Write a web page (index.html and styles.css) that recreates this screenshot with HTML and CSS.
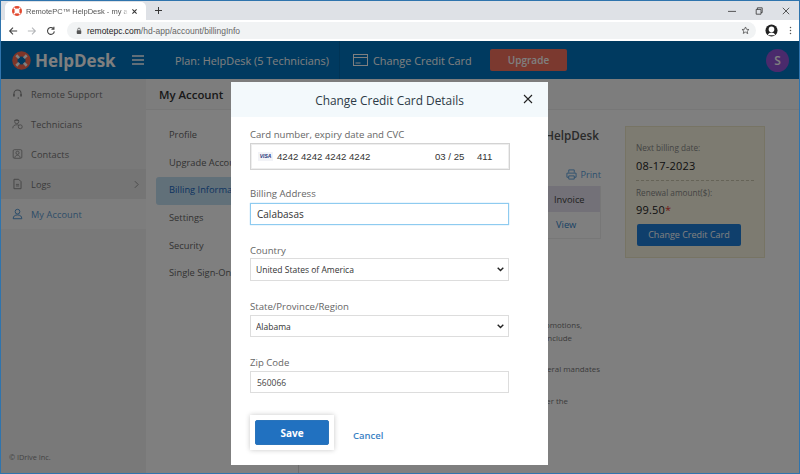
FILE: index.html
```html
<!DOCTYPE html>
<html lang="en">
<head>
<meta charset="utf-8">
<title>RemotePC HelpDesk - my account</title>
<link rel="stylesheet" href="styles.css">
</head>
<body>
<div class="window">
  <div class="tabstrip">
    <div class="tab">
      <svg class="favicon" viewBox="0 0 20 20"><circle cx="10" cy="10" r="7.500" fill="none" stroke="#e2492f" stroke-width="5"/><path d="M3.500 3.500l3.500 3.500M16.500 3.500L13 7M3.500 16.500L7 13M16.500 16.500L13 13" stroke="#fff" stroke-width="2.600"/></svg>
      <span class="tab-title">RemotePC™ HelpDesk - my acco</span>
      <svg class="tab-close" viewBox="0 0 10 10"><path d="M2 2l6 6M8 2l-6 6" stroke="#333" stroke-width="1.500"/></svg>
    </div>
    <svg class="new-tab" viewBox="0 0 10 10"><path d="M5 0v10M0 5h10" stroke="#333" stroke-width="1.400"/></svg>
    <div class="win-controls">
      <svg viewBox="0 0 10 10"><path d="M0 5.500h10" stroke="#333"/></svg>
      <svg viewBox="0 0 10 10"><path d="M1.500 3h6v6h-6zM3 3V1h6v6H7.500" fill="none" stroke="#333"/></svg>
      <svg viewBox="0 0 10 10"><path d="M1 1l8 8M9 1l-8 8" stroke="#333"/></svg>
    </div>
  </div>
  <div class="toolbar">
    <svg class="nav" viewBox="0 0 12 12"><path d="M11 6H2M6 2L2 6l4 4" fill="none" stroke="#444" stroke-width="1.300"/></svg>
    <svg class="nav" viewBox="0 0 12 12"><path d="M1 6h9M6 2l4 4-4 4" fill="none" stroke="#b5b7ba" stroke-width="1.300"/></svg>
    <svg class="nav" viewBox="0 0 12 12"><path d="M10 6.500A4.100 4.100 0 1 1 8.800 3M9.500 0.800v3h-3" fill="none" stroke="#444" stroke-width="1.300"/></svg>
    <div class="omnibox">
      <svg class="lock" viewBox="0 0 8 10"><rect x="1" y="4" width="6" height="5" rx="1" fill="#555"/><path d="M2.300 4V2.800a1.700 1.700 0 0 1 3.400 0V4" fill="none" stroke="#555"/></svg>
      <span class="url"><span class="url-host">remotepc.com</span>/hd-app/account/billingInfo</span>
      <svg class="star" viewBox="0 0 12 12"><path d="M6 1.300l1.400 3.100 3.300.3-2.500 2.200.8 3.300L6 8.200 3 9.900l.8-3.300L1.300 4.700l3.300-.3z" fill="none" stroke="#555" stroke-width="1.100"/></svg>
    </div>
    <svg class="profile" viewBox="0 0 14 14"><circle cx="7" cy="7" r="6.500" fill="#222"/><circle cx="7" cy="5.800" r="3" fill="#fff"/><path d="M2.800 12c1-2 2.600-2.800 4.200-2.800s3.200.8 4.200 2.800z" fill="#fff"/></svg>
    <svg class="dots" viewBox="0 0 4 12"><circle cx="2" cy="2" r="1" fill="#555"/><circle cx="2" cy="6" r="1" fill="#555"/><circle cx="2" cy="10" r="1" fill="#555"/></svg>
  </div>

  <div class="app">
    <header class="topbar">
      <svg class="logo" viewBox="0 0 20 20"><circle cx="10" cy="10" r="7" fill="none" stroke="#ff6a50" stroke-width="5.500"/><path d="M4.500 4.500l3 3M15.500 4.500l-3 3M4.500 15.500l3-3M15.500 15.500l-3-3" stroke="#fff" stroke-width="2.800"/></svg>
      <span class="brand">HelpDesk</span>
      <svg class="burger" viewBox="0 0 12 10"><path d="M0 1h12M0 5h12M0 9h12" stroke="#fff" stroke-width="1.500"/></svg>
      <span class="plan">Plan: HelpDesk (5 Technicians)</span>
      <span class="top-divider"></span>
      <svg class="card-icon" viewBox="0 0 15 12"><rect x="0.500" y="0.500" width="14" height="11" fill="none" stroke="#fff"/><path d="M1 3.500h13M2.500 9h5" stroke="#fff"/></svg>
      <span class="change-link">Change Credit Card</span>
      <span class="upgrade">Upgrade</span>
      <span class="avatar">S</span>
    </header>

    <div class="workspace">
      <nav class="sidebar">
        <div class="side-list">
          <div class="side-item">
            <svg class="side-icon" viewBox="0 0 14 14"><path d="M2.500 9V6.500a4.500 4.500 0 0 1 9 0V9" fill="none" stroke="currentColor" stroke-width="1.300"/><rect x="1.500" y="7" width="2" height="3.500" rx="1" fill="currentColor"/><rect x="10.500" y="7" width="2" height="3.500" rx="1" fill="currentColor"/><circle cx="8" cy="12" r="1" fill="currentColor"/></svg>
            <span>Remote Support</span>
          </div>
          <div class="side-item">
            <svg class="side-icon" viewBox="0 0 14 14"><circle cx="6" cy="4" r="2.600" fill="none" stroke="currentColor"/><path d="M1 12.500c0-3 2-4.500 5-4.500 1 0 2 .2 2.800.7M3 2.500h6" fill="none" stroke="currentColor"/><circle cx="10.500" cy="10.500" r="2.500" fill="none" stroke="currentColor"/></svg>
            <span>Technicians</span>
          </div>
          <div class="side-item">
            <svg class="side-icon" viewBox="0 0 14 14"><rect x="1.500" y="1.500" width="11" height="11" rx="1.500" fill="none" stroke="currentColor"/><circle cx="7" cy="5.500" r="2" fill="none" stroke="currentColor"/><path d="M3.500 12c.4-2.500 2-3.500 3.500-3.500s3.100 1 3.500 3.500" fill="none" stroke="currentColor"/></svg>
            <span>Contacts</span>
          </div>
          <div class="side-item side-logs">
            <svg class="side-icon" viewBox="0 0 14 14"><path d="M2.500 1h6l3 3v9h-9z" fill="none" stroke="currentColor" stroke-width="1.200"/><path d="M5 7.500h4M5 9.500h4" stroke="currentColor"/></svg>
            <span>Logs</span>
            <svg class="side-chevron" viewBox="0 0 6 10"><path d="M1 1l4 4-4 4" fill="none" stroke="currentColor" stroke-width="1.200"/></svg>
          </div>
          <div class="side-item side-active">
            <svg class="side-icon" viewBox="0 0 14 14"><circle cx="7" cy="4" r="3" fill="none" stroke="currentColor" stroke-width="1.200"/><path d="M1.500 13c0-3.300 2.300-4.800 5.500-4.800s5.500 1.500 5.500 4.800z" fill="none" stroke="currentColor" stroke-width="1.200"/></svg>
            <span>My Account</span>
          </div>
        </div>
        <div class="copyright">© IDrive Inc.</div>
      </nav>

      <div class="content">
        <div class="page-title">My Account</div>
        <div class="panels">
          <div class="subnav">
            <div class="sub-item">Profile</div>
            <div class="sub-item">Upgrade Account</div>
            <div class="sub-item sub-active">Billing Information</div>
            <div class="sub-item">Settings</div>
            <div class="sub-item">Security</div>
            <div class="sub-item">Single Sign-On</div>
          </div>
          <div class="main">
            <div class="plan-col">
              <div class="plan-name">HelpDesk</div>
              <div class="print">
                <svg class="print-icon" viewBox="0 0 12 12"><path d="M3 4V1h6v3M3 9H1V4.500h10V9H9M3 7.500h6V11H3z" fill="none" stroke="currentColor"/></svg>
                <span>Print</span>
              </div>
              <div class="table">
                <div class="table-head">Invoice</div>
                <div class="table-cell">View</div>
              </div>
              <div class="notes">
                <p class="note note-a">promotions,</p>
                <p class="note note-b">include</p>
                <p class="note note-c">federal mandates</p>
                <p class="note note-d">under the</p>
              </div>
            </div>
            <aside class="billing-box">
              <div class="box-label">Next billing date:</div>
              <div class="box-value">08-17-2023</div>
              <div class="box-rule"></div>
              <div class="box-label">Renewal amount($):</div>
              <div class="box-value box-amount">99.50<span class="asterisk">*</span></div>
              <div class="box-button">Change Credit Card</div>
            </aside>
          </div>
        </div>
      </div>
    </div>
    <div class="overlay"></div>
  </div>

  <section class="modal">
    <div class="modal-head">
      <span class="modal-title">Change Credit Card Details</span>
      <svg class="modal-close" viewBox="0 0 10 10"><path d="M1 1l8 8M9 1l-8 8" stroke="#222" stroke-width="1.100"/></svg>
    </div>
    <form class="modal-body">
      <label class="field-label">Card number, expiry date and CVC</label>
      <div class="card-field">
        <span class="visa">VISA</span>
        <span class="card-number">4242 4242 4242 4242</span>
        <span class="card-exp">03 / 25</span>
        <span class="card-cvc">411</span>
      </div>
      <label class="field-label label-address">Billing Address</label>
      <input class="text-input input-focus" type="text" value="Calabasas">
      <label class="field-label label-next">Country</label>
      <select class="select-input select-country"><option>United States of America</option></select>
      <label class="field-label label-next">State/Province/Region</label>
      <select class="select-input"><option>Alabama</option></select>
      <label class="field-label label-next">Zip Code</label>
      <input class="text-input input-zip" type="text" value="560066">
      <div class="actions">
        <div class="save-wrap"><button class="save" type="button">Save</button></div>
        <a class="cancel">Cancel</a>
      </div>
    </form>
  </section>
</div>
</body>
</html>
```

FILE: styles.css
```css
* { box-sizing: border-box; }
html, body { margin: 0; height: 100%; overflow: hidden; }
body { font-family: "Open Sans", "Noto Sans", sans-serif; background: #fff; }

.window {
  position: relative;
  width: 800px;
  height: 474px;
  border: 1px solid #2f74ad;
  display: flex;
  flex-direction: column;
  overflow: hidden;
}

/* browser chrome */
.tabstrip {
  height: 19px;
  background: #dee1e6;
  display: flex;
  align-items: flex-end;
  padding-left: 4px;
  flex: none;
}
.tab {
  width: 141px;
  height: 18px;
  background: #fff;
  border-radius: 5px 5px 0 0;
  display: flex;
  align-items: center;
  padding: 0 5px 0 7px;
}
.favicon { width: 10px; height: 10px; flex: none; }
.tab-title {
  margin-left: 4px;
  width: 102px;
  font: 7.500px "Liberation Sans", sans-serif;
  color: #555;
  white-space: nowrap;
  flex: none;
  -webkit-mask-image: linear-gradient(90deg, #000 94%, transparent 100%);
  mask-image: linear-gradient(90deg, #000 94%, transparent 100%);
}
.tab-close { width: 7px; height: 7px; margin-left: 3px; flex: none; }
.new-tab { width: 7px; height: 7px; margin: 0 0 6px 9px; flex: none; }
.win-controls {
  margin-left: auto;
  display: flex;
  gap: 19px;
  padding: 0 9px 5px 0;
}
.win-controls svg { width: 8px; height: 8px; display: block; }
.toolbar {
  height: 21px;
  background: #fff;
  display: flex;
  align-items: center;
  padding-left: 7px;
  flex: none;
}
.nav { width: 10px; height: 10px; margin-right: 9px; flex: none; }
.omnibox {
  margin-left: 2px;
  width: 689px;
  height: 17px;
  background: #f1f3f4;
  border-radius: 9px;
  display: flex;
  align-items: center;
  padding: 0 6px 0 9px;
}
.lock { width: 6px; height: 8px; flex: none; }
.url { margin-left: 5px; font: 8.500px "Liberation Sans", sans-serif; color: #666; }
.url-host { color: #222; }
.star { width: 9px; height: 9px; margin-left: auto; }
.profile { width: 13px; height: 13px; margin-left: 9px; flex: none; }
.dots { width: 3px; height: 9px; margin-left: 11px; flex: none; }

/* app */
.app {
  position: relative;
  flex: 1;
  min-height: 0;
  display: flex;
  flex-direction: column;
}
.overlay { position: absolute; inset: 0; background: rgba(0, 0, 0, .5); }
.topbar {
  height: 38px;
  background: #0074c0;
  color: #fff;
  display: flex;
  align-items: center;
  padding-left: 11px;
  flex: none;
}
.logo { width: 19px; height: 19px; flex: none; }
.brand { margin-left: 4px; width: 97px; font-size: 17px; font-weight: 700; color: #fff; }
.burger { width: 12px; height: 10px; flex: none; }
.plan { margin-left: 31px; font-size: 10.900px; white-space: nowrap; width: 154px; }
.top-divider { width: 1px; height: 38px; background: #0068ad; margin-left: 10px; }
.card-icon { width: 15px; height: 12px; margin-left: 13px; flex: none; }
.change-link { margin-left: 5px; font-size: 10.900px; white-space: nowrap; width: 98px; }
.upgrade {
  margin-left: 19px;
  width: 77px;
  height: 22px;
  background: #f6735f;
  border-radius: 2px;
  font-size: 10px;
  font-weight: 600;
  text-align: center;
  line-height: 22px;
}
.avatar {
  margin-left: auto;
  margin-right: 10px;
  width: 23px;
  height: 23px;
  border-radius: 50%;
  background: #9454d8;
  font-size: 12px;
  font-weight: 600;
  text-align: center;
  line-height: 23px;
}
.workspace { flex: 1; min-height: 0; display: flex; }
.sidebar {
  width: 145px;
  background: #f2f2f2;
  display: flex;
  flex-direction: column;
  flex: none;
}
.side-item {
  height: 30px;
  display: flex;
  align-items: center;
  padding-left: 11px;
  font-size: 9.200px;
  letter-spacing: .1px;
  color: #777;
}
.side-item span { margin-left: 8px; }
.side-icon { width: 11px; height: 12px; flex: none; color: #888; }
.side-logs { background: #ebebeb; }
.side-chevron { width: 5px; height: 9px; margin-left: auto; margin-right: 7px; color: #999; }
.side-active { background: #fbfbfb; color: #5b9ad0; }
.side-active .side-icon { color: #4c94d2; }
.copyright { margin-top: auto; padding: 0 0 11px 8px; font-size: 7.300px; color: #888; }
.content { flex: 1; min-width: 0; display: flex; flex-direction: column; background: #fff; }
.page-title {
  height: 31px;
  background: #fafafa;
  border-bottom: 1px solid #efefef;
  padding: 8px 0 0 13px;
  font-size: 11.400px;
  font-weight: 600;
  color: #333;
  flex: none;
}
.panels { flex: 1; min-height: 0; display: flex; }
.subnav {
  width: 153px;
  border-right: 1px solid #ddd;
  padding: 12px 0 0 10px;
  flex: none;
}
.sub-item {
  height: 27.700px;
  padding-left: 13px;
  font-size: 9.300px;
  line-height: 26px;
  color: #666;
  white-space: nowrap;
}
.sub-active { background: #c3e0f3; border-radius: 3px 0 0 3px; color: #1766bf; }
.main { flex: 1; min-width: 0; display: flex; }
.plan-col { width: 302px; flex: none; }
.plan-name {
  margin-top: 17px;
  text-align: right;
  font-size: 11.700px;
  font-weight: 600;
  color: #555;
  padding-right: 2px;
}
.print {
  margin-top: 25px;
  display: flex;
  justify-content: flex-end;
  align-items: center;
  gap: 3px;
  font-size: 9.200px;
  color: #5aa0dc;
}
.print-icon { width: 11px; height: 11px; }
.table { margin-top: 5px; border: 1px solid #eee; border-width: 0 1px 1px 0; }
.table-head {
  height: 26px;
  background: #e6e3f0;
  padding-left: 255px;
  font-size: 9.300px;
  line-height: 27px;
  color: #444;
}
.table-cell {
  height: 26px;
  padding-left: 257px;
  font-size: 9.300px;
  line-height: 26px;
  color: #2f82c8;
}
.notes { margin-top: 80px; }
.note { margin: 0; text-align: right; font-size: 7.900px; line-height: 13px; color: #777; white-space: nowrap; }
.note-a { padding-right: 19px; }
.note-b { padding-right: 29px; }
.note-c { padding-right: 1px; margin-top: 18px; }
.note-d { padding-right: 33px; margin-top: 19px; }
.billing-box {
  margin: 16px 0 0 24px;
  width: 140px;
  height: 132px;
  background: #fbf7e2;
  border: 1px solid #efe9c9;
  padding: 15px 10px 0;
  align-self: flex-start;
  flex: none;
}
.box-label { font-size: 8.200px; line-height: 12px; color: #888; white-space: nowrap; }
.box-value { margin-top: 5px; font-size: 11px; line-height: 14px; font-weight: 500; color: #222; letter-spacing: .2px; }
.box-rule { margin: 7px 0 6px; border-top: 1px dashed #cbc7ae; }
.box-amount { margin-top: 4px; }
.asterisk { color: #e0332f; }
.box-button {
  margin: 7px 0 0 1px;
  width: 104px;
  height: 22px;
  background: #1e7ed8;
  border-radius: 2px;
  color: #fff;
  font-size: 9px;
  text-align: center;
  line-height: 22px;
  white-space: nowrap;
}

/* modal */
.modal {
  position: absolute;
  left: 230px;
  top: 81px;
  width: 317px;
  height: 383px;
  background: #fff;
  display: flex;
  flex-direction: column;
}
.modal-head {
  position: relative;
  height: 35px;
  background: #f3f9fc;
  text-align: center;
  line-height: 34px;
  flex: none;
}
.modal-title { font-size: 11.900px; color: #2d3b47; }
.modal-close { position: absolute; right: 15px; top: 12px; width: 10px; height: 10px; }
.modal-body { padding: 10px 39px 0 19px; display: flex; flex-direction: column; }
.field-label { font-size: 9.600px; line-height: 16px; color: #666; height: 14px; white-space: nowrap; }
.card-field {
  margin-top: 2px;
  width: 260px;
  height: 27px;
  border: 1px solid #d3d3d3;
  box-shadow: inset 0 0 0 1px #eeeeee;
  display: flex;
  align-items: center;
  padding-left: 7px;
  font: 9.600px "Liberation Sans", sans-serif;
  color: #333;
}
.visa {
  width: 15px;
  height: 9px;
  background: #f2f3f7;
  font-size: 5px;
  font-weight: 700;
  font-style: italic;
  line-height: 9px;
  text-align: center;
  color: #26337a;
  flex: none;
}
.card-number { margin-left: 4px; width: 158px; flex: none; }
.card-exp { width: 42px; flex: none; }
.label-address { margin-top: 16px; }
.label-next { margin-top: 18px; }
.text-input {
  margin-top: 2px;
  width: 259px;
  height: 22px;
  border: 1px solid #ddd;
  border-radius: 0;
  outline: none;
  padding: 0 6px;
  font-family: "Open Sans", sans-serif;
  font-size: 8.500px;
  color: #444;
  background: #fff;
}
.input-focus { margin-top: 3px; border-color: #8ecbf0; box-shadow: 0 0 1px #8ecbf0; font-size: 10px; color: #333; }
.select-input {
  margin-top: 2px;
  width: 259px;
  height: 22px;
  border: 1px solid #ddd;
  border-radius: 0;
  outline: none;
  padding-left: 5px;
  -webkit-appearance: none;
  appearance: none;
  background: #fff url("data:image/svg+xml,%3Csvg xmlns='http://www.w3.org/2000/svg' width='7' height='5' viewBox='0 0 7 5'%3E%3Cpath d='M.7.8l2.800 2.800L6.300.8' fill='none' stroke='%23222' stroke-width='1.400'/%3E%3C/svg%3E") no-repeat right 4px center;
  font-family: "Open Sans", sans-serif;
  font-size: 8.500px;
  color: #333;
}
.select-country { margin-top: 1px; height: 23px; }
.actions { margin-top: 22px; display: flex; align-items: flex-start; }
.save-wrap {
  width: 84px;
  height: 35px;
  padding: 5px;
  background: #fff;
  box-shadow: 0 0 5px rgba(0, 0, 0, .22);
}
.save {
  display: block;
  width: 74px;
  height: 25px;
  border: 1px solid #2a74bb;
  border-radius: 2px;
  background: #2171c0;
  color: #fff;
  font-family: "Open Sans", sans-serif;
  font-size: 10px;
  font-weight: 700;
  padding: 0;
}
.cancel { margin: 14px 0 0 19px; font-size: 9.500px; font-weight: 600; color: #3b82c4; }
```
